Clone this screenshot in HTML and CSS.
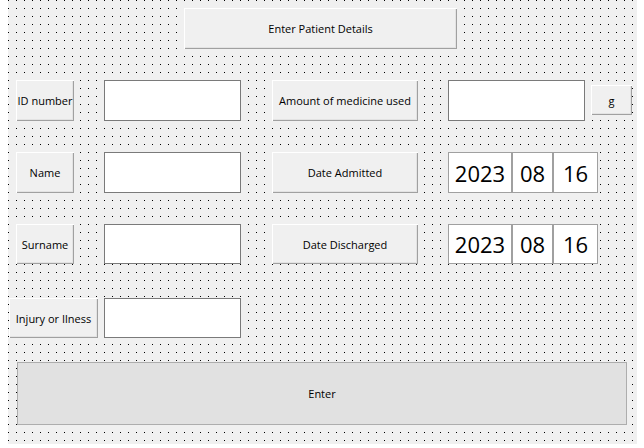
FILE: index.html
```html
<!DOCTYPE html>
<html>
<head>
<meta charset="utf-8">
<link rel="stylesheet" href="styles.css">
</head>
<body>
<div class="form">
  <div class="title-row">
    <div class="lbl title">Enter Patient Details</div>
  </div>

  <div class="row row-1">
    <div class="lbl short">ID number</div>
    <div class="tb"></div>
    <div class="lbl wide">Amount of medicine used</div>
    <div class="tb tb-right"></div>
    <div class="lbl unit">g</div>
  </div>

  <div class="row row-2">
    <div class="lbl short">Name</div>
    <div class="tb"></div>
    <div class="lbl wide">Date Admitted</div>
    <div class="date">
      <div class="dpart year">2023</div>
      <div class="dpart month">08</div>
      <div class="dpart day">16</div>
    </div>
  </div>

  <div class="row row-3">
    <div class="lbl short">Surname</div>
    <div class="tb"></div>
    <div class="lbl wide">Date Discharged</div>
    <div class="date">
      <div class="dpart year">2023</div>
      <div class="dpart month">08</div>
      <div class="dpart day">16</div>
    </div>
  </div>

  <div class="row row-4">
    <div class="lbl injury">Injury or Ilness</div>
    <div class="tb tb-injury"></div>
  </div>

  <div class="enter-row">
    <div class="enter">Enter</div>
  </div>
</div>
</body>
</html>
```

FILE: styles.css
```css
html, body {
  margin: 0;
  padding: 0;
  background: #ffffff;
}

body {
  font-family: "Open Sans", "Noto Sans", "Liberation Sans", sans-serif;
  font-size: 11px;
  color: #000000;
}

.form {
  margin-left: 8px;
  width: 629px;
  height: 444px;
  box-sizing: border-box;
  background-color: #f0f0f0;
  background-image: conic-gradient(from 270deg at 1px 1px, #000000 90deg, transparent 0);
  background-size: 8px 8px;
  background-position: 0 0;
  display: flex;
  flex-direction: column;
  padding-top: 8px;
}

.lbl {
  background: #f0f0f0;
  box-shadow: inset 1px 1px 0 #ffffff, inset -1px -1px 0 #a0a0a0, inset -2px -2px 0 #e3e3e3;
  display: flex;
  align-items: center;
  justify-content: center;
  white-space: nowrap;
  overflow: hidden;
  box-sizing: border-box;
}

.title-row {
  display: flex;
  padding-left: 176px;
}

.title {
  width: 273px;
  height: 41px;
}

.row {
  display: flex;
  align-items: flex-start;
  padding-left: 8px;
}

.row-1 { margin-top: 31px; height: 41px; }
.row-2 { margin-top: 31px; height: 41px; }
.row-3 { margin-top: 31px; height: 40px; }
.row-4 { margin-top: 34px; height: 40px; padding-left: 1px; }

.short {
  width: 58px;
  height: 100%;
}

.wide {
  width: 146px;
  height: 100%;
  margin-left: 31px;
}

.unit {
  width: 41px;
  height: 30px;
  margin-left: 6px;
  margin-top: 5px;
}

.injury {
  width: 89px;
  height: 100%;
}

.tb {
  width: 137px;
  height: 100%;
  margin-left: 30px;
  background: #ffffff;
  border: 1px solid #7a7a7a;
  box-sizing: border-box;
}

.tb-right { margin-left: 30px; }
.tb-injury { margin-left: 6px; }

.date {
  display: flex;
  height: 100%;
  margin-left: 30px;
}

.dpart {
  height: 100%;
  background: #ffffff;
  border: 1px solid #a0a0a0;
  box-sizing: border-box;
  display: flex;
  align-items: center;
  justify-content: center;
  font-size: 22px;
}

.year { width: 64px; }
.month { width: 41px; }
.day { width: 45px; }

.enter-row {
  display: flex;
  padding-left: 9px;
  margin-top: 24px;
}

.enter {
  width: 610px;
  height: 63px;
  background: #e1e1e1;
  border: 1px solid #adadad;
  box-sizing: border-box;
  display: flex;
  align-items: center;
  justify-content: center;
}
```
